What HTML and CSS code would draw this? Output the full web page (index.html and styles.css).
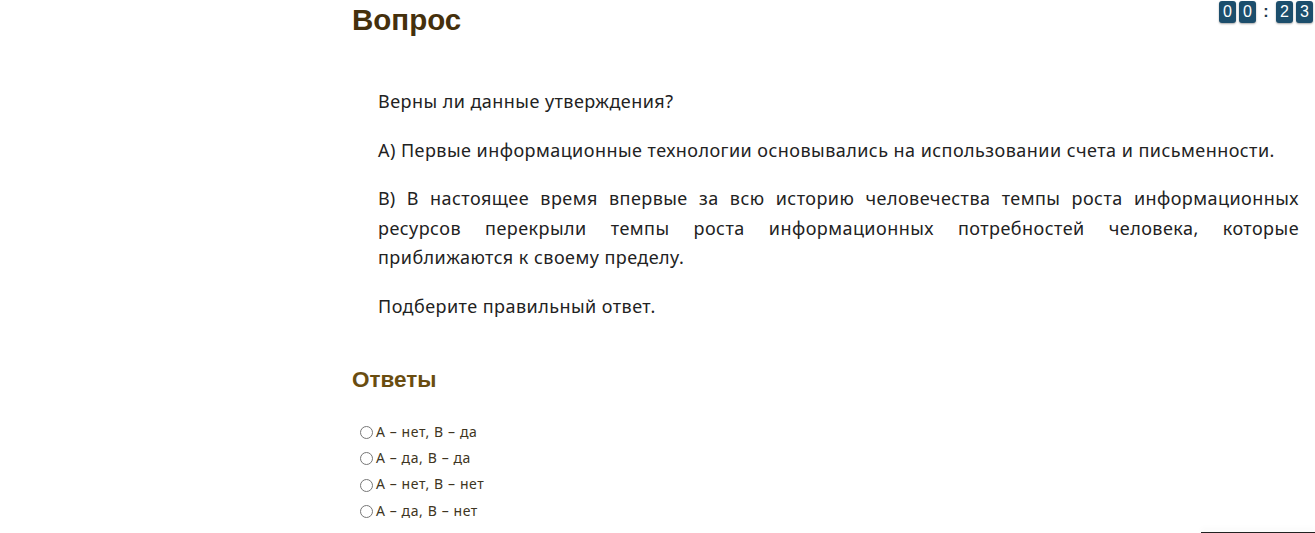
FILE: index.html
```html
<!DOCTYPE html>
<html lang="ru">
<head>
<meta charset="utf-8">
<title>Вопрос</title>
<link rel="stylesheet" href="styles.css">
</head>
<body>
<div class="timer">
  <span class="digit">0</span><span class="digit">0</span><span class="colon">:</span><span class="digit">2</span><span class="digit">3</span>
</div>
<main class="page">
  <h1 class="title">Вопрос</h1>
  <div class="question">
    <p>Верны ли данные утверждения?</p>
    <p>А) Первые информационные технологии основывались на использовании счета и письменности.</p>
    <p>В) В настоящее время впервые за всю историю человечества темпы роста информационных ресурсов перекрыли темпы роста информационных потребностей человека, которые приближаются к своему пределу.</p>
    <p>Подберите правильный ответ.</p>
  </div>
  <h2 class="answers-title">Ответы</h2>
  <ul class="answers">
    <li><span class="radio"></span>А – нет, В – да</li>
    <li><span class="radio"></span>А – да, В – да</li>
    <li><span class="radio"></span>А – нет, В – нет</li>
    <li><span class="radio"></span>А – да, В – нет</li>
  </ul>
</main>
<div class="corner-bar"></div>
</body>
</html>
```

FILE: styles.css
```css
html, body {
  margin: 0;
  padding: 0;
  background: #ffffff;
}
body {
  width: 1315px;
  height: 533px;
  overflow: hidden;
  position: relative;
  font-family: "Noto Sans", "Open Sans", sans-serif;
}
.page {
  margin-left: 352px;
  width: 947px;
}
.title {
  margin: 0;
  font-family: "Liberation Sans", Arial, sans-serif;
  font-weight: bold;
  font-size: 29.5px;
  line-height: 40px;
  color: #45300c;
}
.question {
  padding: 47px 0 0 26px;
  color: #222222;
  font-size: 18px;
  line-height: 29.5px;
  letter-spacing: 0.45px;
}
.question p {
  margin: 0 0 19px 0;
  text-align: justify;
}
.question p:last-child {
  margin-bottom: 0;
}
.answers-title {
  margin: 44px 0 0 0;
  font-family: "Liberation Sans", Arial, sans-serif;
  font-weight: bold;
  font-size: 22.5px;
  line-height: 30px;
  color: #6a4d10;
}
.answers {
  list-style: none;
  margin: 23px 0 0 0;
  padding: 0 0 0 8px;
  color: #3e3522;
  font-size: 14px;
  letter-spacing: 0.6px;
}
.answers li {
  display: flex;
  align-items: center;
  height: 26.3px;
}
.radio {
  width: 11px;
  height: 11px;
  border: 1px solid #777;
  border-radius: 50%;
  margin-right: 3px;
  margin-top: 3px;
  box-sizing: content-box;
}
.timer {
  position: absolute;
  top: 1px;
  right: 2px;
  display: flex;
  align-items: center;
}
.digit {
  width: 17px;
  height: 22px;
  background: #1c4e6c;
  color: #ffffff;
  border-radius: 3px;
  box-shadow: 0 1px 2px rgba(0,0,0,0.35);
  font-family: "Liberation Sans", Arial, sans-serif;
  font-size: 16px;
  line-height: 22px;
  text-align: center;
  margin-left: 3px;
}
.digit:first-child {
  margin-left: 0;
}
.colon {
  width: 14px;
  text-align: center;
  font-family: "Liberation Sans", Arial, sans-serif;
  font-weight: bold;
  font-size: 16px;
  color: #1c3a4c;
  margin-left: 3px;
}
.corner-bar {
  position: absolute;
  right: 0;
  bottom: 0;
  width: 114px;
  height: 1px;
  background: #222;
  box-shadow: 0 -2px 6px rgba(0,0,0,0.12);
}
```
